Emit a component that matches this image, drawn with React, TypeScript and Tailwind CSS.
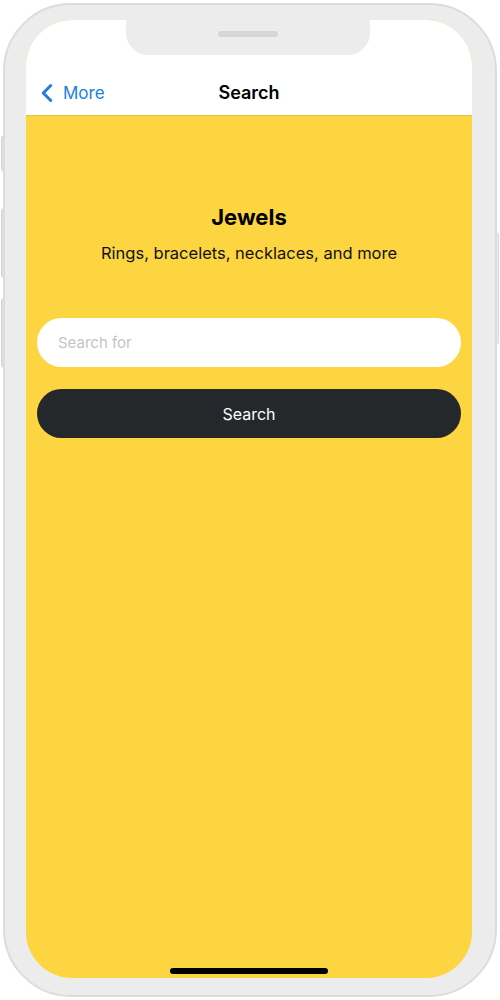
import { ChevronLeft } from "lucide-react";

export default function App() {
  return (
    <div
      className="w-[500px] h-[1000px] bg-white relative"
      style={{ fontFamily: "Inter, 'Noto Sans', sans-serif" }}
    >
      {/* side buttons */}
      <div className="absolute left-[1px] top-[135px] w-[4px] h-[37px] rounded-l bg-[#e2e2e2] border border-[#d0d0d0]" />
      <div className="absolute left-[1px] top-[208px] w-[4px] h-[70px] rounded-l bg-[#e2e2e2] border border-[#d0d0d0]" />
      <div className="absolute left-[1px] top-[298px] w-[4px] h-[70px] rounded-l bg-[#e2e2e2] border border-[#d0d0d0]" />
      <div className="absolute right-[1px] top-[232px] w-[4px] h-[113px] rounded-r bg-[#ececec] border border-[#dadada]" />

      <div className="absolute left-[3px] top-[3px] w-[494px] h-[994px] rounded-[68px] bg-[#ececec] border-2 border-[#dcdcdc] pl-[21px] pr-[23px] pt-[15px] pb-[17px]">
        <div className="relative h-full rounded-[46px] overflow-hidden bg-[#fdd541] flex flex-col">
          {/* notch */}
          <div className="absolute left-[100px] top-0 w-[244px] h-[35px] bg-[#ececec] rounded-b-[22px] flex justify-center">
            <div className="mt-[11px] w-[60px] h-[6px] rounded-full bg-[#d6d6d6]" />
          </div>

          <div className="h-[96px] bg-white pt-[52px] border-b border-[#e6c43a]">
            <div className="relative h-[40px] flex items-center justify-center">
              <div className="absolute left-[6px] top-[6px] flex items-center text-[#1a7fe0]">
                <ChevronLeft size={30} strokeWidth={2.4} />
                <span className="ml-[1px] mt-[2px] text-[17px]">More</span>
              </div>
              <span className="text-[18px] font-semibold text-black">Search</span>
            </div>
          </div>

          <div className="flex-1 flex flex-col items-center px-[11px] pt-[87px]">
            <h1 className="text-[22px] leading-[28px] font-bold text-black">Jewels</h1>
            <p className="mt-[10px] text-[16.5px] leading-[24px] text-[#111]">
              Rings, bracelets, necklaces, and more
            </p>

            <input
              placeholder="Search for"
              className="mt-[53px] w-full h-[49px] rounded-full bg-white px-[21px] text-[15px] outline-none placeholder:text-[#c4c4c4]"
            />
            <button className="mt-[22px] w-full h-[49px] rounded-full bg-[#25282a] text-white text-[16px]">
              Search
            </button>
          </div>

          <div className="flex justify-center pb-[4px]">
            <div className="w-[158px] h-[6px] rounded-full bg-black" />
          </div>
        </div>
      </div>
    </div>
  );
}
